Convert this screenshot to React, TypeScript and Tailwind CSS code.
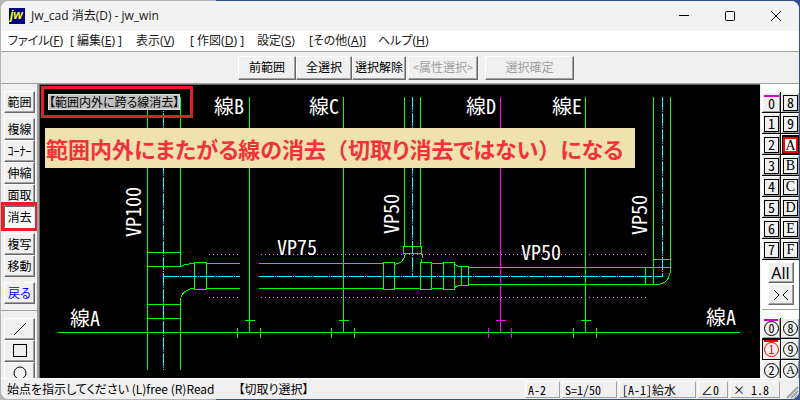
import React from "react";

const UI_FONT =
  "font-['Noto_Sans_CJK_JP',sans-serif] [font-feature-settings:'palt','hwid']";

const RAISED =
  "border border-t-white border-l-white border-r-[#696969] border-b-[#696969] shadow-[inset_-1px_-1px_0_#a0a0a0]";

type MenuEntry = { before?: string; label: string; keyName: string; after?: string; width: string };

const MENUS: MenuEntry[] = [
  { label: "ファイル", keyName: "F", width: "w-[62px]" },
  { before: "[ ", label: "編集", keyName: "E", after: " ]", width: "w-[66px]" },
  { label: "表示", keyName: "V", width: "w-[54px]" },
  { before: "[ ", label: "作図", keyName: "D", after: " ]", width: "w-[67px]" },
  { label: "設定", keyName: "S", width: "w-[52px]" },
  { before: "[", label: "その他", keyName: "A", after: "]", width: "w-[69px]" },
  { label: "ヘルプ", keyName: "H", width: "w-[60px]" },
];

function TitleBar() {
  return (
    <header className="flex h-[30px] shrink-0 items-center bg-[#f3f3f3] pl-2">
      <svg width="16" height="16" viewBox="0 0 16 16" aria-hidden="true">
        <rect width="16" height="16" fill="#000087" />
        <text
          x="1"
          y="11"
          fill="#ffff00"
          className="font-['Liberation_Sans',sans-serif] text-[12px] font-bold italic"
        >
          jw
        </text>
      </svg>
      <h1 className="ml-[6px] flex-1 whitespace-nowrap font-['Open_Sans','Noto_Sans_CJK_JP',sans-serif] text-[12px] leading-4 text-[#1a1a1a]">
        Jw_cad 消去(D) - jw_win
      </h1>
      <div className="flex h-full text-black">
        <button aria-label="最小化" className="flex w-[46px] items-center justify-center">
          <svg width="10" height="10" viewBox="0 0 10 10" shapeRendering="crispEdges">
            <path d="M0 4.5H10" stroke="currentColor" />
          </svg>
        </button>
        <button aria-label="最大化" className="flex w-[46px] items-center justify-center">
          <svg width="10" height="10" viewBox="0 0 10 10" fill="none">
            <rect x=".5" y=".5" width="9" height="9" rx="1" stroke="currentColor" />
          </svg>
        </button>
        <button aria-label="閉じる" className="flex w-[46px] items-center justify-center">
          <svg width="10" height="10" viewBox="0 0 10 10">
            <path d="M0 0L10 10M10 0L0 10" stroke="currentColor" />
          </svg>
        </button>
      </div>
    </header>
  );
}

function MenuBar() {
  return (
    <nav className="flex h-[20px] shrink-0 items-center bg-white pl-[7px] text-[12px] leading-5 text-[#202020]">
      {MENUS.map((m) => (
        <button
          key={m.keyName}
          className={`${m.width} whitespace-pre text-left font-['Noto_Sans','Noto_Sans_CJK_JP',sans-serif] [font-feature-settings:'palt']`}
        >
          {m.before}
          {m.label}(<u>{m.keyName}</u>){m.after}
        </button>
      ))}
    </nav>
  );
}

function BarButton({
  label,
  width,
  disabled = false,
}: {
  label: string;
  width: string;
  disabled?: boolean;
}) {
  return (
    <button
      disabled={disabled}
      className={`${width} ${RAISED} h-6 whitespace-nowrap bg-[#f0f0f0] pb-[2px] text-[12px] leading-5 text-black disabled:text-[#a0a0a0]`}
    >
      {label}
    </button>
  );
}

function ToolBar() {
  return (
    <div className="flex h-[33px] shrink-0 items-center border-y border-[#a0a0a0] bg-[#f0f0f0] pl-[237px]">
      <BarButton label="前範囲" width="w-[58px]" />
      <BarButton label="全選択" width="w-[56px]" />
      <BarButton label="選択解除" width="w-[54px]" />
      <div className="w-[2px]" />
      <BarButton label="<属性選択>" width="w-[70px]" disabled />
      <div className="w-[7px]" />
      <BarButton label="選択確定" width="w-[89px]" disabled />
    </div>
  );
}

function Tool({
  children,
  label,
  className = "text-black",
}: {
  children: React.ReactNode;
  label?: string;
  className?: string;
}) {
  return (
    <button
      aria-label={label}
      className={`${RAISED} ${className} flex h-[22px] w-[31px] shrink-0 items-center justify-center whitespace-nowrap bg-[#f0f0f0] text-[12px] leading-5`}
    >
      {children}
    </button>
  );
}

function ToolPalette() {
  return (
    <aside className="flex w-[38px] shrink-0 flex-col overflow-hidden border-r-2 border-[#a0a0a0] bg-[#f0f0f0] pt-[7px]">
      <div className="flex flex-col gap-[5px] border-b border-[#a0a0a0] pb-[6px] pl-[3px]">
        <Tool>範囲</Tool>
        <div>
          <Tool>複線</Tool>
          <Tool>ｺｰﾅｰ</Tool>
          <Tool>伸縮</Tool>
          <Tool>面取</Tool>
          <div className="relative">
            <button
              aria-pressed="true"
              className="flex h-[22px] w-[31px] items-center justify-center whitespace-nowrap border border-t-[#696969] border-r-white border-b-white border-l-[#696969] bg-[#f8f8f8] text-[12px] leading-5 text-black"
            >
              消去
            </button>
            <span className="pointer-events-none absolute -top-1 -left-[3px] z-10 h-[29px] w-[37px] border-[3px] border-[#ed1c24]" />
          </div>
        </div>
        <div>
          <Tool>複写</Tool>
          <Tool>移動</Tool>
        </div>
        <Tool className="text-[#0000ff]">戻る</Tool>
      </div>
      <div className="pt-[7px] pl-[3px]">
        <Tool label="線">
          <svg width="14" height="14" viewBox="0 0 14 14">
            <path d="M1 13L13 1" stroke="currentColor" />
          </svg>
        </Tool>
        <Tool label="矩形">
          <svg width="14" height="14" viewBox="0 0 14 14" fill="none">
            <rect x=".5" y=".5" width="13" height="12" stroke="currentColor" />
          </svg>
        </Tool>
        <Tool label="円">
          <svg width="14" height="14" viewBox="0 0 14 14" fill="none">
            <circle cx="7" cy="7" r="6" stroke="currentColor" />
          </svg>
        </Tool>
      </div>
    </aside>
  );
}

const LABELS = [
  { text: "線B", x: 214, y: 114 },
  { text: "線C", x: 309, y: 114 },
  { text: "線D", x: 466, y: 114 },
  { text: "線E", x: 552, y: 114 },
  { text: "線A", x: 70, y: 326 },
  { text: "線A", x: 706, y: 325 },
  { text: "VP75", x: 277, y: 255 },
  { text: "VP50", x: 521, y: 260 },
];

const SIDE_LABELS = [
  { text: "VP100", x: 141, y: 237 },
  { text: "VP50", x: 399, y: 234 },
  { text: "VP50", x: 647, y: 235 },
];

const RISERS = [
  { x: 249, color: "#00ff00" },
  { x: 343, color: "#00ff00" },
  { x: 500, color: "#ff00ff" },
  { x: 585, color: "#00ff00" },
];

function Drawing() {
  return (
    <svg
      width="720"
      height="294"
      viewBox="40 85 720 294"
      className="block shrink-0"
      role="img"
      aria-label="配管図"
    >
      <g transform="translate(.5 .5)" fill="none" shapeRendering="crispEdges">
        <g stroke="#ff80ff" strokeDasharray="1 3">
          <path d="M208 254H239M260 254H645M208 297H239M260 297H645" />
        </g>
        <g stroke="#00ff00">
          <path d="M57 332H739" />
          <path d="M147 96V369M180 96V266M180 297V369M147 252H180M147 266H180M147 304H180M147 318H180" />
          <path d="M180 266Q186 263 194 263M180 297Q184 288 194 288" />
          <path d="M194 262H206V289H194Z" />
          <path d="M206 263H239M206 288H239M258 263H383M258 288H383" />
          <path d="M383 262H394V289H383ZM420 262H431V289H420ZM443 262H454V289H443ZM461 266H468V285H461Z" />
          <path d="M394 288H420M431 263H443M431 288H443" />
          <path d="M394 264Q403 263 405 253M422 253Q422 259 420 263" />
          <path d="M404 96V246M420 96V246M403 246H421V253H403Z" />
          <path d="M454 264Q457 266 461 266M454 287Q457 285 461 285" />
          <path d="M468 267H670M468 284H655M645 267V284M653 96V284M653 259H670" />
          <path d="M670 96V267Q670 284 655 284" />
        </g>
        <g stroke="#00ffff">
          <path d="M163 96V369M412 96V276M662 96V276" strokeDasharray="13 1 1 1" />
          <path d="M163 276H239M258 276H662" strokeDasharray="15 1 1 1" />
        </g>
        {RISERS.map((r) => (
          <path
            key={r.x}
            stroke={r.color}
            d={`M${r.x} 96V332M${r.x - 5} 320H${r.x + 5}M${r.x - 12} 327V337M${r.x + 11} 327V337`}
          />
        ))}
      </g>
      <g
        fill="#fff"
        className="font-['Noto_Sans_CJK_JP',sans-serif] text-[20px] [font-feature-settings:'hwid']"
      >
        {LABELS.map((l) => (
          <text key={`${l.text}-${l.x}`} x={l.x} y={l.y}>
            {l.text}
          </text>
        ))}
        {SIDE_LABELS.map((l) => (
          <text key={l.x} transform={`translate(${l.x} ${l.y}) rotate(-90)`}>
            {l.text}
          </text>
        ))}
      </g>
    </svg>
  );
}

function Canvas() {
  return (
    <main className="relative min-w-0 flex-1 overflow-hidden border-t border-l border-[#696969] bg-black">
      <Drawing />
      <div className="absolute top-px left-px flex h-8 w-[152px] items-center border-[3px] border-[#ed1c24] pb-px pl-1">
        <span className="whitespace-nowrap border border-[#e0e0e0] bg-[#c0c0c0] text-[12px] leading-[14px] text-black">
          【範囲内外に跨る線消去】
        </span>
      </div>
      <p className="absolute top-[43px] left-[5px] flex h-10 w-[590px] items-center whitespace-nowrap bg-[#f0e2ae] pl-px text-[22px] leading-8 font-bold text-[#f0323c]">
        範囲内外にまたがる線の消去
        <span className="[font-feature-settings:normal]">（</span>
        切取り消去ではない
        <span className="[font-feature-settings:normal]">）</span>
        になる
      </p>
    </main>
  );
}

const LAYERS = ["0", "8", "1", "9", "2", "A", "3", "B", "4", "C", "5", "D", "6", "E", "7", "F"];
const GROUPS = ["0", "8", "1", "9", "2", "A"];

function LayerButton({ name }: { name: string }) {
  const face = /[A-F]/.test(name)
    ? "font-['Liberation_Serif',serif] leading-[14px]"
    : "font-['Noto_Sans_CJK_JP',sans-serif] leading-[12px]";
  const frame =
    name === "A"
      ? "border-2 border-[#ff0000] bg-white"
      : name === "0"
        ? "border-t-2 border-[#d400d4]"
        : "border border-black";
  return (
    <button
      aria-label={`レイヤ ${name}`}
      className={`${name === "A" ? "bg-black" : "bg-[#f0f0f0] shadow-[inset_-1px_-1px_0_#a0a0a0]"} flex h-5 items-center justify-center border-t border-l border-white`}
    >
      <span className={`${frame} ${face} block h-4 w-[15px] text-center text-[14px] text-black`}>
        {name}
      </span>
    </button>
  );
}

function GroupButton({ name }: { name: string }) {
  const active = name === "1";
  return (
    <button
      aria-label={`レイヤグループ ${name}`}
      className={`${active ? "border-black" : "border-white shadow-[inset_-1px_-1px_0_#a0a0a0]"} relative flex h-5 items-center justify-center border-t border-l bg-[#f0f0f0]`}
    >
      {(active || name === "0") && (
        <span
          className={`${active ? "bg-[#ff0000]" : "bg-[#d400d4]"} absolute top-0 right-[2px] left-[1px] h-[2px]`}
        />
      )}
      <span
        className={`${active ? "border-[#ff0000] text-[#ff0000]" : "border-black text-black"} ${name === "A" ? "font-['Liberation_Serif',serif] leading-[13px]" : "leading-[12px]"} block size-[15px] rounded-full border text-center text-[12px]`}
      >
        {name}
      </span>
    </button>
  );
}

function LayerPalette() {
  return (
    <aside className="flex w-[39px] shrink-0 flex-col overflow-hidden border-l border-[#f0f0f0] bg-white pl-px">
      <div className="mt-2 grid grid-cols-2 gap-px bg-black pb-px">
        {LAYERS.map((n) => (
          <LayerButton key={n} name={n} />
        ))}
      </div>
      <div className="flex flex-col items-center gap-px border-b border-[#a0a0a0] pt-[2px] pb-1">
        <button
          className={`${RAISED} h-[21px] w-[26px] bg-[#f0f0f0] font-['Noto_Sans',sans-serif] text-[16px] leading-[18px] text-black`}
        >
          All
        </button>
        <button
          aria-label="切替"
          className={`${RAISED} flex h-[21px] w-[26px] items-center justify-center bg-[#f0f0f0]`}
        >
          <svg width="16" height="12" viewBox="0 0 16 12" fill="none">
            <path d="M1 1L6 6L1 11M15 1L10 6L15 11" stroke="#000" />
          </svg>
        </button>
      </div>
      <div className="mt-2 grid grid-cols-2 gap-px bg-black pb-px">
        {GROUPS.map((n) => (
          <GroupButton key={n} name={n} />
        ))}
      </div>
    </aside>
  );
}

function StatusField({ text, width }: { text: string; width: string }) {
  return (
    <span
      className={`${width} h-[17px] whitespace-pre border border-t-white border-r-[#a0a0a0] border-b-[#a0a0a0] border-l-white pl-[2px] leading-[15px]`}
    >
      {text}
    </span>
  );
}

function StatusBar() {
  return (
    <footer className="flex h-[21px] shrink-0 items-center border-t border-white bg-[#f0f0f0] pl-[6px] text-[12px] leading-4 text-black">
      <p className="min-w-0 flex-1 overflow-hidden whitespace-pre [font-feature-settings:'palt']">
        {"始点を指示してください (L)free (R)Read"}
        <span className="ml-6">【切取り選択】</span>
      </p>
      <div className="flex gap-[2px]">
        <StatusField text="A-2" width="w-[35px]" />
        <StatusField text="S=1/50" width="w-[55px]" />
        <StatusField text="[A-1]給水" width="w-[77px]" />
        <StatusField text="∠0" width="w-[30px]" />
        <StatusField text="× 1.8" width="w-[50px]" />
      </div>
      <svg width="19" height="16" viewBox="0 0 19 16" className="self-end" aria-hidden="true">
        <path d="M7 15L18 4M11 15L18 8M15 15L18 12" stroke="#a0a0a0" strokeWidth="2" />
      </svg>
    </footer>
  );
}

export default function App() {
  return (
    <div
      className={`${UI_FONT} flex h-screen bg-linear-to-r from-[#b4b4b4] from-27% to-[#344f91] to-27% p-px`}
    >
      <div className="flex min-w-0 flex-1 flex-col overflow-hidden rounded-lg bg-[#f0f0f0]">
        <TitleBar />
        <MenuBar />
        <ToolBar />
        <div className="flex min-h-0 flex-1">
          <ToolPalette />
          <Canvas />
          <LayerPalette />
        </div>
        <StatusBar />
      </div>
    </div>
  );
}
